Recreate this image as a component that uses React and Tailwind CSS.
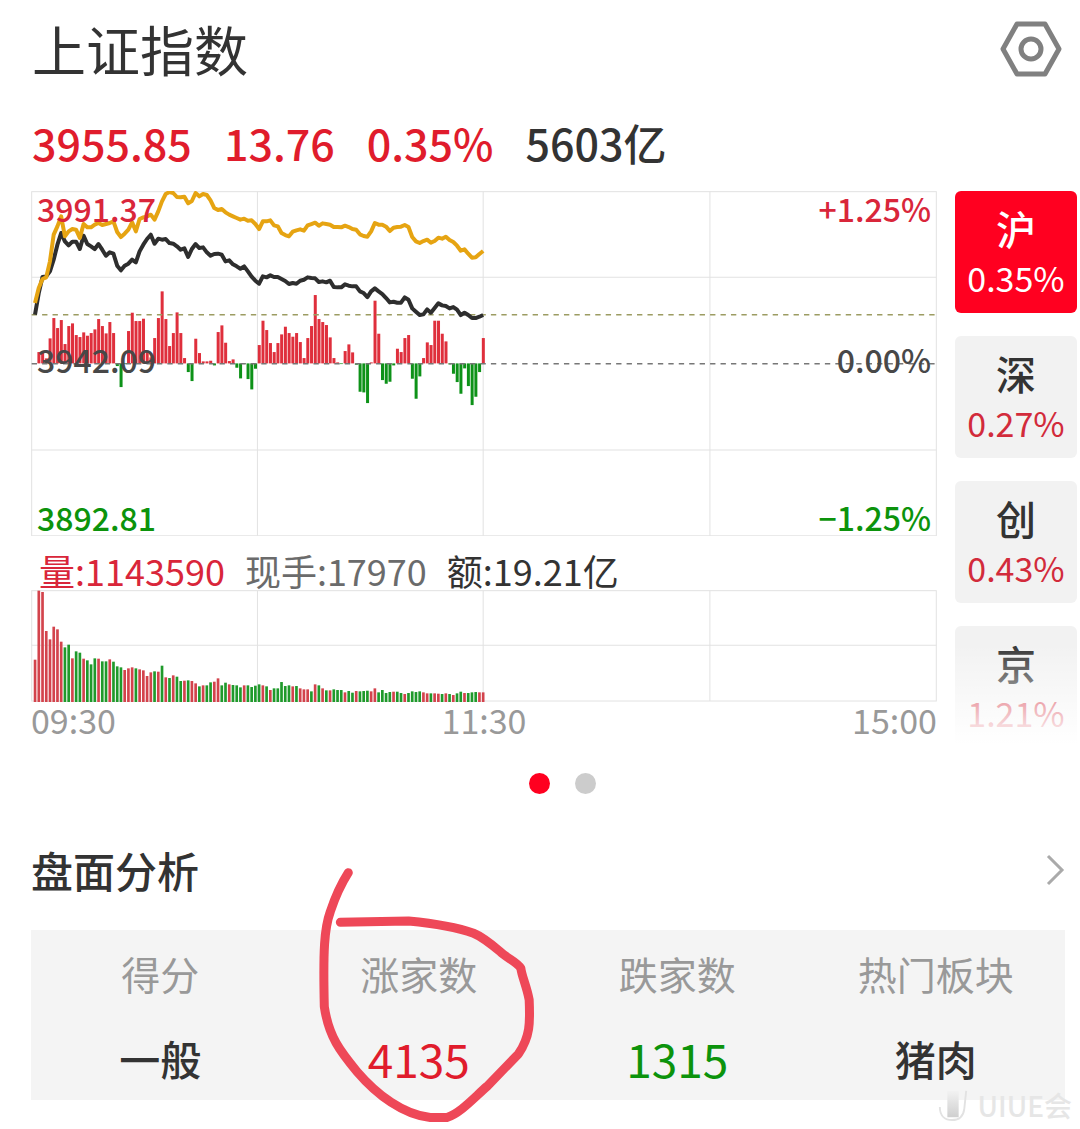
import React, { useState } from "react";

// one value per minute, 09:30 - 11:30
const PRICE = [
  405, 340, 292, 290, 275, 240, 195, 160, 185, 197, 186, 186, 208, 168, 193,
  200, 208, 193, 210, 228, 218, 222, 258, 272, 258, 252, 240, 248, 215, 195,
  178, 165, 192, 177, 180, 178, 190, 192, 200, 210, 206, 232, 208, 193, 205,
  203, 218, 228, 223, 222, 225, 245, 242, 254, 260, 267, 260, 275, 291, 303,
  312, 290, 293, 287, 292, 292, 298, 304, 313, 310, 312, 303, 300, 293, 295,
  296, 307, 305, 308, 303, 322, 323, 323, 314, 318, 320, 320, 335, 340, 352,
  335, 326, 335, 343, 355, 368, 366, 369, 369, 353, 360, 386, 396, 406, 404,
  389, 399, 385, 371, 377, 379, 386, 382, 390, 406, 399, 406, 415, 415, 411,
  406,
];

const AVERAGE = [
  370, 325, 298, 293, 245, 165, 140, 110, 170, 155, 148, 150, 175, 133, 143,
  143, 135, 130, 136, 133, 130, 125, 157, 172, 162, 150, 128, 155, 118, 113,
  110, 105, 120, 95, 65, 43, 37, 40, 52, 53, 51, 71, 64, 40, 50, 43, 46, 62,
  85, 91, 88, 98, 105, 110, 115, 120, 117, 123, 122, 133, 148, 125, 125, 122,
  137, 140, 160, 166, 170, 156, 152, 149, 153, 137, 133, 129, 138, 131, 133,
  135, 142, 142, 143, 138, 142, 148, 150, 164, 169, 171, 155, 130, 135, 135,
  141, 154, 144, 142, 141, 136, 142, 172, 185, 190, 184, 180, 189, 184, 174,
  177, 171, 181, 187, 198, 213, 209, 222, 234, 233, 223, 214,
];

const MOMENTUM = [
  0, 34, 34, 15, 75, 136, 106, 130, 58, 112, 120, 85, 79, 93, 83, 91, 102, 133,
  112, 90, 124, 91, -8, -71, -2, 97, 152, 127, 127, 134, 34, 18, 76, 136, 216,
  133, 52, 91, 153, 91, 16, -26, -53, 74, 31, 6, 6, 8, -6, 94, 114, 62, 7, 12,
  -13, -45, -2, -47, -78, -16, 55, 128, 100, 61, 34, 61, 87, 110, 91, 80, 91,
  64, 16, 76, 112, 205, 133, 124, 115, 78, 16, 3, -2, 37, 57, 33, -4, -85, -87,
  -119, 3, 188, 89, -50, -61, -55, -6, 44, 34, 76, 85, -46, -106, -39, 16, 63,
  55, 128, 128, 89, 66, -3, -31, -56, -91, -15, -68, -125, -100, -26, 76,
];

// positive = up minute, negative = down minute
const VOLUME = [
  127, 334, 330, 213, 188, 226, 218, 181, -164, -172, 131, -152, -148, 130,
  -125, -113, -131, 130, -122, -122, 128, -121, -107, -104, 96, 101, 104, -101,
  98, 95, 78, 89, -92, 91, -109, 74, -72, 80, -76, -63, 64, -65, 63, 56, -47,
  50, -50, -59, 61, 71, -50, -58, 53, -51, -50, -44, 50, -50, -45, -49, -53,
  50, -47, 36, -41, -41, -60, -48, -50, 47, -48, 41, 38, 38, -32, 53, -50, 41,
  -35, 35, -38, -36, -36, 29, -33, -28, 33, -32, -33, -34, 32, 41, -29, -36,
  -27, -30, 31, -31, -27, 24, -27, -32, -30, -32, 29, 26, -26, 26, 25, -24, 26,
  -24, 21, -26, -31, 27, -27, -29, -30, 29, 29,
];

const MARKETS = [
  { name: "沪", change: "0.35%" },
  { name: "深", change: "0.27%" },
  { name: "创", change: "0.43%" },
  { name: "京", change: "1.21%" },
];

const minuteX = (i) => 46 + i * 11.2;
const toPoints = (series) => series.map((y, i) => `${minuteX(i)},${y}`).join(" ");

const PriceChart = () => (
  <svg viewBox="34 34 2717 1035" className="block w-full" role="img" aria-label="分时走势">
    <g stroke="#e2e2e2" strokeWidth="3" fill="none">
      <rect x="36" y="36" width="2713" height="1032" />
      <path d="M36 293H2749M36 811H2749M713 36V1068M1390 36V1068M2070 36V1068" />
    </g>
    {MOMENTUM.map((v, i) => (
      <rect
        key={i}
        x={minuteX(i) - 4}
        y={v > 0 ? 551 - v : 551}
        width="9"
        height={Math.abs(v)}
        fill={v > 0 ? "#df2f3c" : "#0d9218"}
      />
    ))}
    <path d="M36 405H2749" stroke="#9c9c62" strokeWidth="4" strokeDasharray="16 15.3" />
    <path d="M36 552H2749" stroke="#777" strokeWidth="4" strokeDasharray="16 15.3" />
    <g fill="none" strokeWidth="12" strokeLinejoin="round">
      <polyline points={toPoints(PRICE)} stroke="#2e2e2e" />
      <polyline points={toPoints(AVERAGE)} stroke="#e6a412" />
    </g>
  </svg>
);

const VolumeChart = () => (
  <svg viewBox="34 147 2717 337" className="block w-full" role="img" aria-label="成交量">
    <g stroke="#e2e2e2" strokeWidth="3" fill="none">
      <rect x="36" y="149" width="2713" height="331" />
      <path d="M36 313H2749M713 149V480M1390 149V480M2070 149V480" />
    </g>
    {VOLUME.map((v, i) => (
      <rect
        key={i}
        x={minuteX(i) - 4}
        y={483 - Math.abs(v)}
        width="8"
        height={Math.abs(v)}
        fill={v > 0 ? "#d3434c" : "#1f9a2b"}
      />
    ))}
  </svg>
);

export default function App() {
  const [market, setMarket] = useState("沪");
  const [page, setPage] = useState(0);

  return (
    <div className="relative w-full overflow-hidden bg-white pb-7 font-['Noto_Sans_CJK_SC',sans-serif] text-[#333]">
      <header className="flex h-[98px] items-center justify-between pl-8 pr-[17px]">
        <h1 className="text-[54px] leading-[74px]">上证指数</h1>
        <button type="button" aria-label="设置">
          <svg viewBox="0 0 64 64" className="size-16" fill="none" stroke="#808080" strokeWidth="5" strokeLinejoin="round">
            <path d="M18 7H46L60 32L46 57H18L4 32Z" />
            <circle cx="32" cy="32" r="10" />
          </svg>
        </button>
      </header>

      <div className="mb-[17px] mt-3 flex gap-8 pl-8 text-[43px] font-medium leading-[64px] text-[#e01c2c]">
        <span>3955.85</span>
        <span>13.76</span>
        <span>0.35%</span>
        <span className="text-[#333]">5603亿</span>
      </div>

      <main className="flex items-start gap-[18px] pl-[31px] pr-[3px]">
        <div className="min-w-0 flex-1">
          <div className="relative">
            <PriceChart />
            <div className="absolute inset-0 flex flex-col justify-between px-1.5 pb-0.5 text-[32px] font-medium leading-[34px]">
              <div className="flex justify-between text-[#d9263a]">
                <span>3991.37</span>
                <span>+1.25%</span>
              </div>
              <div className="flex justify-between pb-2 text-[#484848]">
                <span>3942.09</span>
                <span>0.00%</span>
              </div>
              <div className="flex justify-between text-[#0c930c]">
                <span>3892.81</span>
                <span>−1.25%</span>
              </div>
            </div>
          </div>
          <div className="flex gap-5 pl-2 pt-3.5 text-[36px] leading-[40px]">
            <span className="text-[#d9263a]">量:1143590</span>
            <span className="text-[#6b6b6b]">现手:17970</span>
            <span>额:19.21亿</span>
          </div>
          <VolumeChart />
          <div className="grid grid-cols-3 text-[34px] leading-[36px] text-[#999]">
            <span>09:30</span>
            <span className="text-center">11:30</span>
            <span className="text-right">15:00</span>
          </div>
        </div>

        <div className="relative h-[553px] w-[122px] shrink-0 overflow-hidden">
          <div className="flex flex-col gap-[23px]">
            {MARKETS.map((m) => (
              <button
                key={m.name}
                type="button"
                onClick={() => setMarket(m.name)}
                className={`flex h-[122px] shrink-0 flex-col items-center justify-center rounded-md pt-0.5 ${
                  market === m.name ? "bg-[#ff0020] text-white" : "bg-[#f2f2f2]"
                }`}
              >
                <span className="text-[40px] font-medium leading-[50px]">{m.name}</span>
                <span
                  className={`text-[34px] leading-[50px] ${
                    market === m.name ? "text-white" : "text-[#d22b3b]"
                  }`}
                >
                  {m.change}
                </span>
              </button>
            ))}
          </div>
          <div className="pointer-events-none absolute inset-x-0 bottom-0 h-[100px] bg-linear-to-b from-white/0 to-white" />
        </div>
      </main>

      <div className="mt-[29px] flex justify-center gap-[25px] pl-11">
        {[0, 1].map((p) => (
          <button
            key={p}
            type="button"
            aria-label={`第${p + 1}页`}
            onClick={() => setPage(p)}
            className={`size-[21px] rounded-full ${page === p ? "bg-[#ff0020]" : "bg-[#ccc]"}`}
          />
        ))}
      </div>

      <section className="pl-[31px] pr-[15px] pt-11">
        <a href="#analysis" className="flex items-center justify-between pb-7">
          <h2 className="text-[42px] font-medium leading-[64px]">盘面分析</h2>
          <svg viewBox="0 0 20 32" className="h-8 w-5" fill="none" stroke="#aaa" strokeWidth="3">
            <path d="M3 2L17 16L3 30" />
          </svg>
        </a>
        <div className="relative">
          <table className="w-full table-fixed bg-[#f4f4f4] text-center">
            <thead>
              <tr className="h-[85px] text-[39px] leading-[50px] text-[#999]">
                <th className="font-normal">得分</th>
                <th className="font-normal">涨家数</th>
                <th className="font-normal">跌家数</th>
                <th className="font-normal">热门板块</th>
              </tr>
            </thead>
            <tbody>
              <tr className="h-[85px] text-[46px] leading-[60px]">
                <td className="text-[41px] font-medium">一般</td>
                <td className="text-[#e01c2c]">4135</td>
                <td className="text-[#0c930c]">1315</td>
                <td className="text-[41px] font-medium">猪肉</td>
              </tr>
            </tbody>
          </table>
          {/* hand-drawn marker around the risers count */}
          <svg
            viewBox="-31 0 776 837"
            className="pointer-events-none absolute -top-20 left-1/4 w-1/4"
            fill="none"
            stroke="#ee4858"
            strokeWidth="27"
            strokeLinecap="round"
            strokeLinejoin="round"
          >
            <path d="M144 68C130 90 105 140 90 185C72 235 68 300 72 470C85 560 120 605 170 665C230 735 310 795 390 803L440 803C480 790 520 745 560 710L655 612C690 560 690 520 687 450C680 410 665 380 662 355C650 335 620 325 600 305C570 280 540 258 520 250C460 228 400 220 325 213L120 217" />
          </svg>
        </div>
      </section>

      {/* watermark */}
      <div className="pointer-events-none absolute bottom-1 right-2 flex items-center gap-2 text-[28px] font-medium leading-[38px] text-[#e6e6e6]">
        <svg viewBox="0 0 34 36" className="h-9 w-8" fill="none">
          <defs>
            <linearGradient id="mark" x1="0" y1="0" x2="0" y2="1">
              <stop offset="0" stopColor="#f2f2f2" />
              <stop offset="1" stopColor="#cfcfcf" />
            </linearGradient>
          </defs>
          <rect x="11" y="3" width="12" height="28" fill="url(#mark)" />
          <path d="M3 20C3 30 9 34 16 34C24 34 28 30 29 22L31 3" stroke="#e2e2e2" strokeWidth="2" />
        </svg>
        <span>UIUE会</span>
      </div>
    </div>
  );
}
